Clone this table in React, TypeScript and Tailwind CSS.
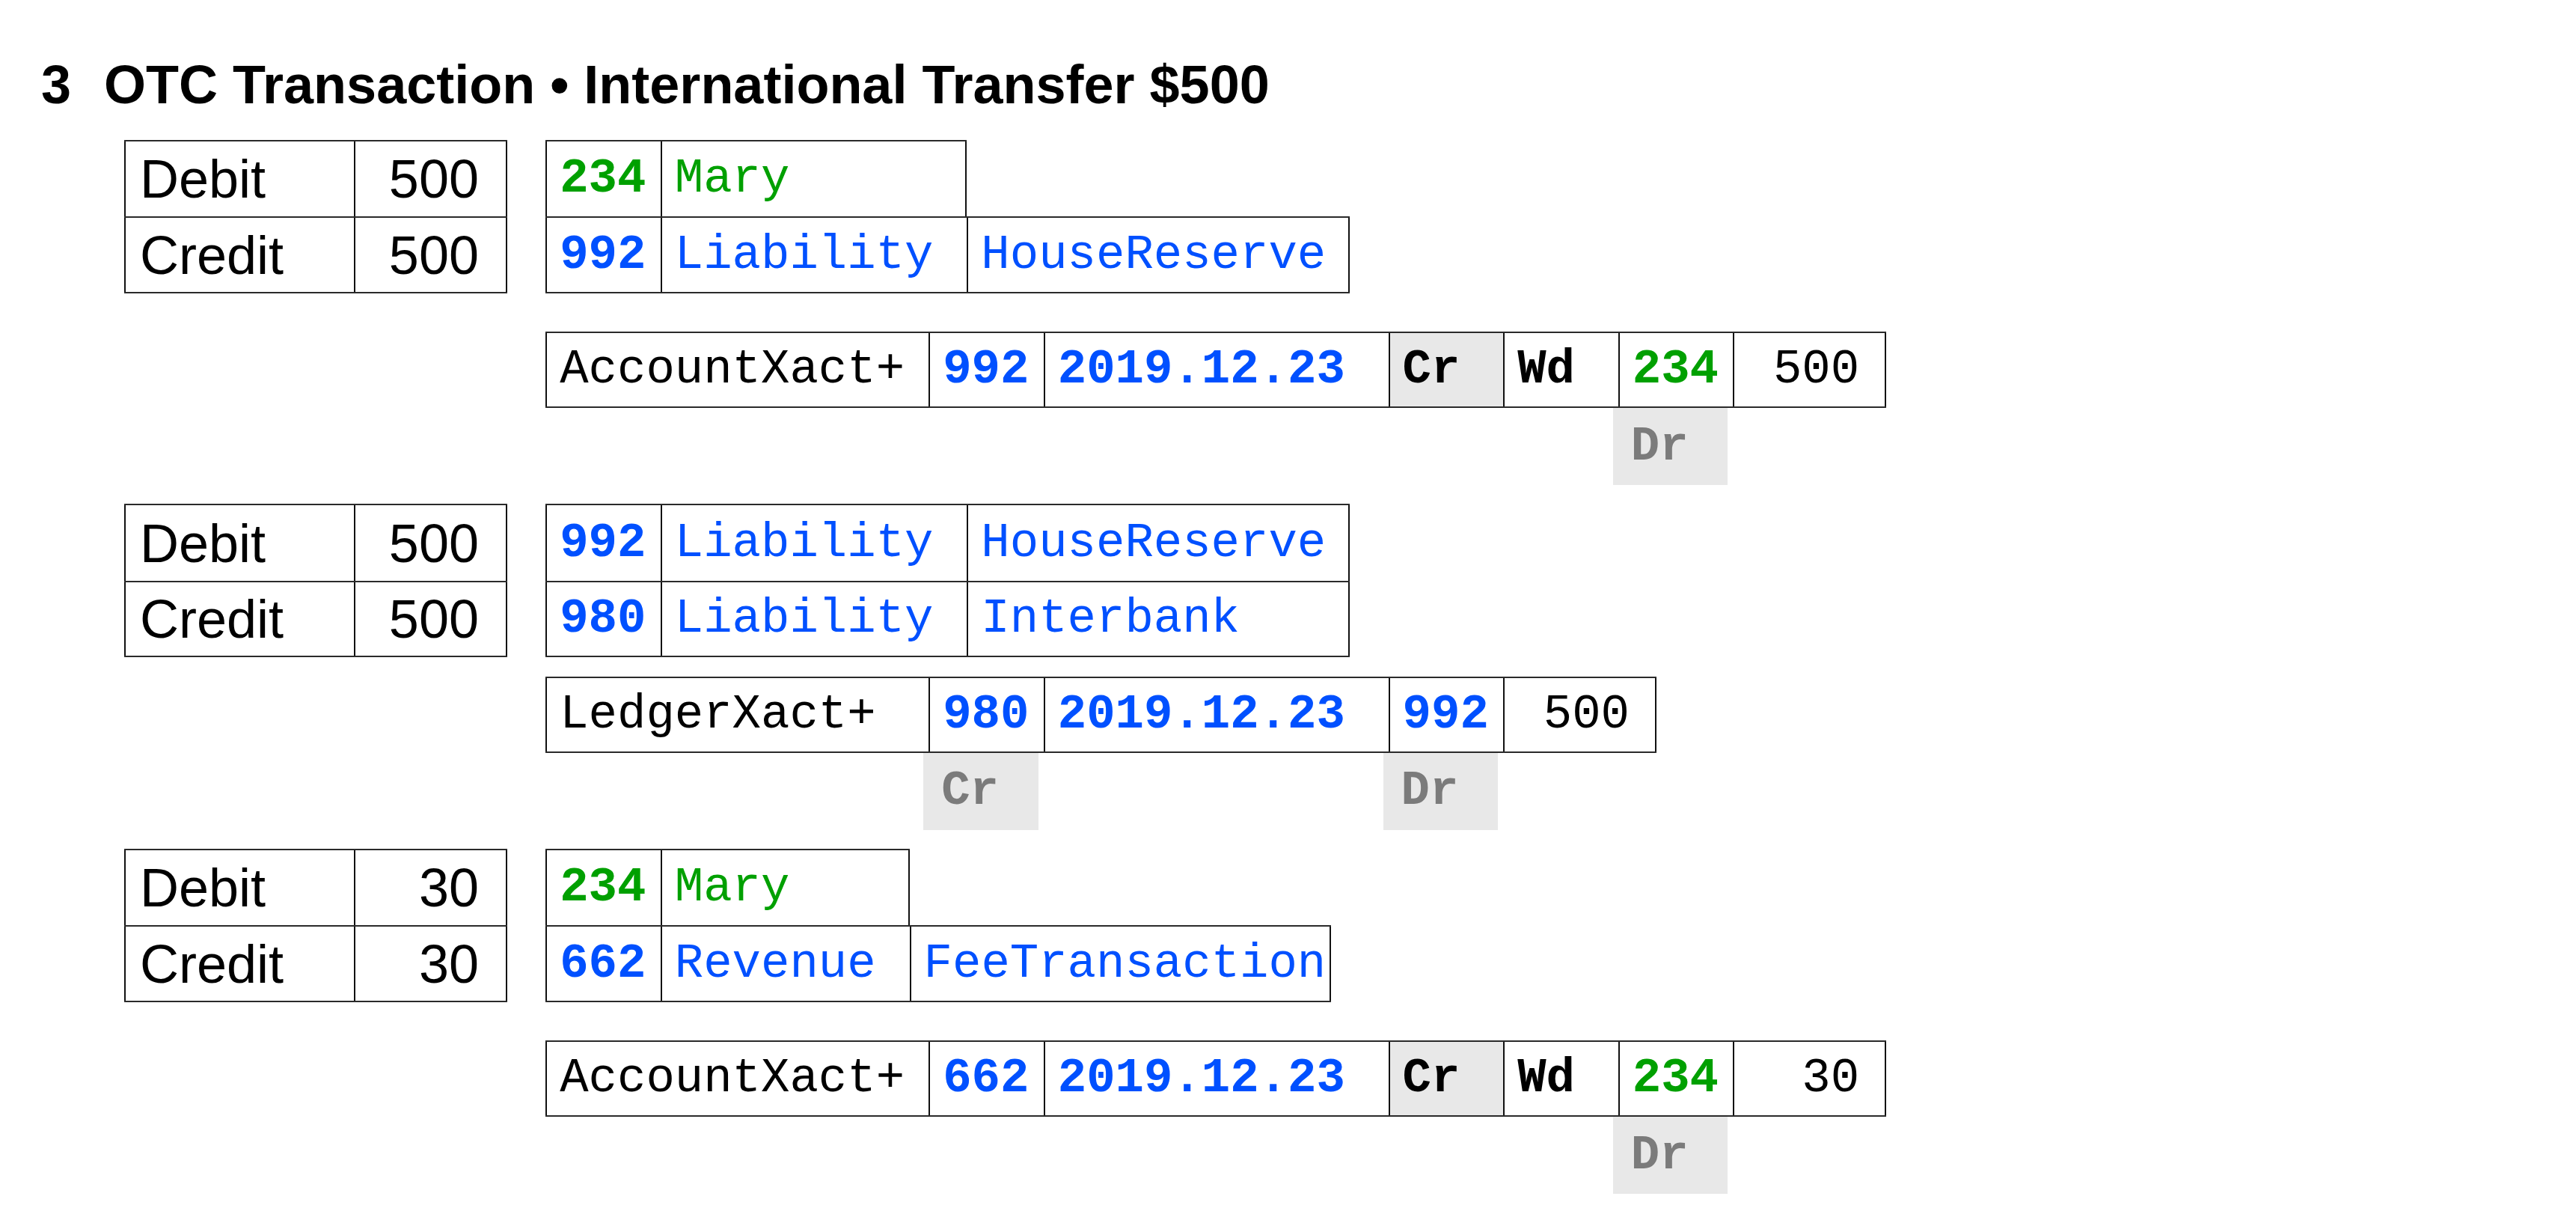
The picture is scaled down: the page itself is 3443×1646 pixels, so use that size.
type Cell = {
  text?: string;
  w: string;
  tone?: "black" | "green" | "blue";
  bold?: boolean;
  shade?: boolean;
  right?: boolean;
  sans?: boolean;
};

const toneClass = {
  black: "text-black",
  green: "text-[#00a000]",
  blue: "text-[#0050ff]",
};

function Row({ cells, last }: { cells: Cell[]; last?: boolean }) {
  return (
    <div
      className={
        "flex h-[102.4px] w-max border-t-2 border-[#2a2a2a] " +
        (last ? "border-b-2" : "")
      }
    >
      {cells.map((c, i) => (
        <div
          key={i}
          className={[
            c.w,
            "flex shrink-0 items-center whitespace-pre border-l-2 border-[#111]",
            i === cells.length - 1 ? "border-r-2" : "",
            c.right ? (c.sans ? "justify-end pr-[36px]" : "justify-end pr-[34px]") : c.sans ? "pl-[19px]" : "pl-[17px]",
            c.sans
              ? "font-['Liberation_Sans',Arial,sans-serif] text-[72px]"
              : "font-['Liberation_Mono','Courier_New',monospace] text-[64px]",
            c.bold ? "font-bold" : "font-normal",
            c.shade ? "bg-[#e8e8e8]" : "",
            toneClass[c.tone ?? "black"],
          ].join(" ")}
        >
          {c.text}
        </div>
      ))}
    </div>
  );
}

function Table({ rows }: { rows: Cell[][] }) {
  return (
    <div className="flex flex-col">
      {rows.map((r, i) => (
        <Row key={i} cells={r} last={i === rows.length - 1} />
      ))}
    </div>
  );
}

function Tag({ label }: { label: string }) {
  return (
    <div className="flex h-[102.4px] w-[153.6px] shrink-0 -translate-x-[7px] items-center bg-[#e8e8e8] pl-[24px] font-['Liberation_Mono','Courier_New',monospace] text-[64px] font-bold text-[#7b7b7b]">
      {label}
    </div>
  );
}

function Amounts({ value }: { value: string }) {
  return (
    <Table
      rows={[
        [
          { text: "Debit", w: "w-[307.2px]", sans: true },
          { text: value, w: "w-[204.8px]", sans: true, right: true },
        ],
        [
          { text: "Credit", w: "w-[307.2px]", sans: true },
          { text: value, w: "w-[204.8px]", sans: true, right: true },
        ],
      ]}
    />
  );
}

const mary = (w: string): Cell[] => [
  { text: "234", w: "w-[153.6px]", tone: "green", bold: true },
  { text: "Mary", w, tone: "green" },
];

const acct = (num: string, kind: string, name: string, kw: string, nw: string): Cell[] => [
  { text: num, w: "w-[153.6px]", tone: "blue", bold: true },
  { text: kind, w: kw, tone: "blue" },
  { text: name, w: nw, tone: "blue" },
];

const accountXact = (acctNo: string, amount: string): Cell[] => [
  { text: "AccountXact+", w: "w-[512px]" },
  { text: acctNo, w: "w-[153.6px]", tone: "blue", bold: true },
  { text: "2019.12.23", w: "w-[460.8px]", tone: "blue", bold: true },
  { text: "Cr", w: "w-[153.6px]", bold: true, shade: true },
  { text: "Wd", w: "w-[153.6px]", bold: true },
  { text: "234", w: "w-[153.6px]", tone: "green", bold: true },
  { text: amount, w: "w-[204.8px]", right: true },
];

export default function App() {
  return (
    <div className="min-h-screen bg-white pt-[77px] text-black">
      <h1 className="flex h-[72px] items-center pl-[55px] font-['Liberation_Sans',Arial,sans-serif] text-[72px] font-bold leading-[72px]">
        <span className="mr-[44px]">3</span>
        <span>OTC Transaction • International Transfer $500</span>
      </h1>

      <div className="mt-[38px] flex flex-col gap-[25.6px] pl-[166px]">
        {/* block 1 */}
        <div className="flex gap-[51.2px]">
          <Amounts value="500" />
          <div className="flex flex-col">
            <Table
              rows={[
                mary("w-[409.6px]"),
                acct("992", "Liability", "HouseReserve", "w-[409.6px]", "w-[512px]"),
              ]}
            />
            <div className="mt-[51.2px]">
              <Table rows={[accountXact("992", "500")]} />
            </div>
            <div className="flex">
              <div className="w-[1433.6px] shrink-0" />
              <Tag label="Dr" />
            </div>
          </div>
        </div>

        {/* block 2 */}
        <div className="flex gap-[51.2px]">
          <Amounts value="500" />
          <div className="flex flex-col">
            <Table
              rows={[
                acct("992", "Liability", "HouseReserve", "w-[409.6px]", "w-[512px]"),
                acct("980", "Liability", "Interbank", "w-[409.6px]", "w-[512px]"),
              ]}
            />
            <div className="mt-[25.6px]">
              <Table
                rows={[
                  [
                    { text: "LedgerXact+", w: "w-[512px]" },
                    { text: "980", w: "w-[153.6px]", tone: "blue", bold: true },
                    { text: "2019.12.23", w: "w-[460.8px]", tone: "blue", bold: true },
                    { text: "992", w: "w-[153.6px]", tone: "blue", bold: true },
                    { text: "500", w: "w-[204.8px]", right: true },
                  ],
                ]}
              />
            </div>
            <div className="flex">
              <div className="w-[512px] shrink-0" />
              <Tag label="Cr" />
              <div className="w-[460.8px] shrink-0" />
              <Tag label="Dr" />
            </div>
          </div>
        </div>

        {/* block 3 */}
        <div className="flex gap-[51.2px]">
          <Amounts value="30" />
          <div className="flex flex-col">
            <Table
              rows={[
                mary("w-[332.8px]"),
                acct("662", "Revenue", "FeeTransaction", "w-[332.8px]", "w-[563.2px]"),
              ]}
            />
            <div className="mt-[51.2px]">
              <Table rows={[accountXact("662", "30")]} />
            </div>
            <div className="flex">
              <div className="w-[1433.6px] shrink-0" />
              <Tag label="Dr" />
            </div>
          </div>
        </div>
      </div>
    </div>
  );
}
